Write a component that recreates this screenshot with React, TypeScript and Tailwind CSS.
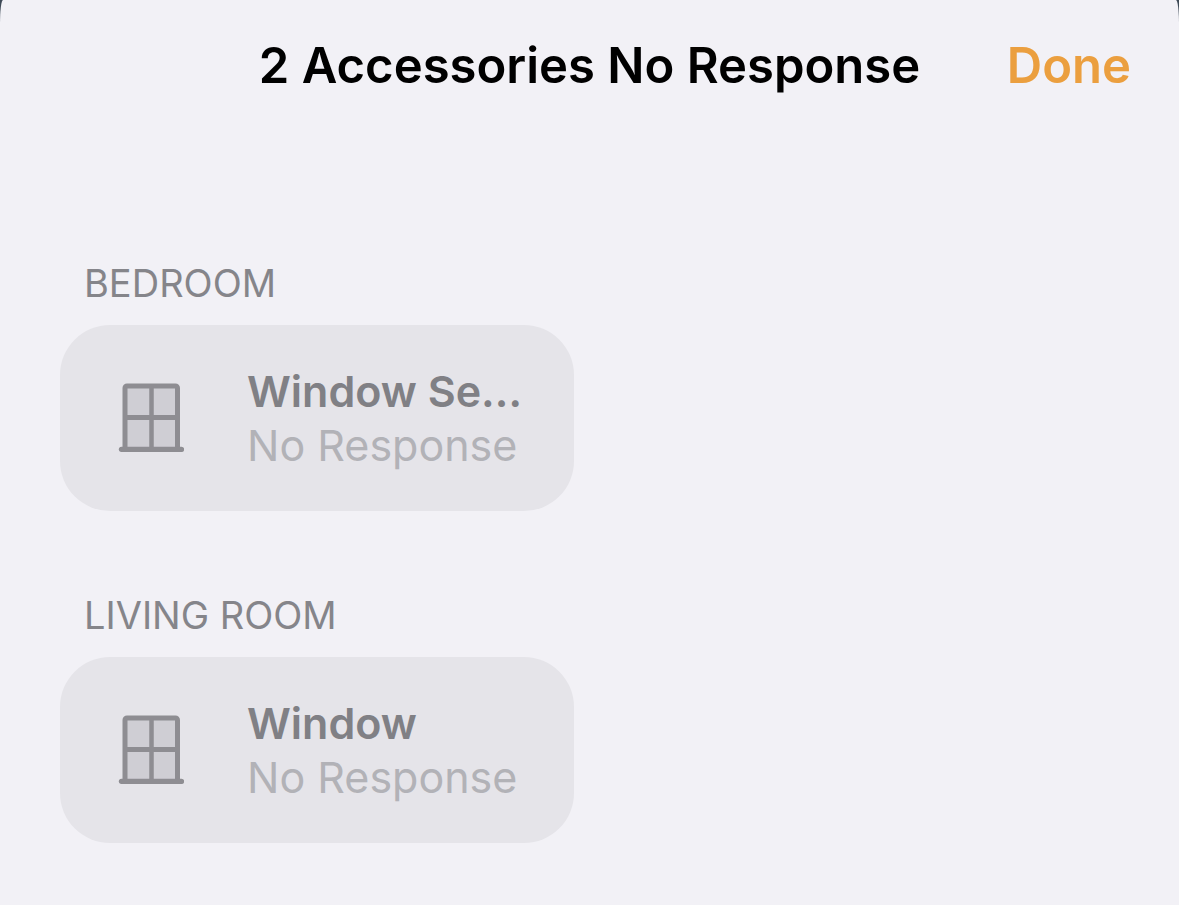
import React from 'react';

type Accessory = { id: number; name: string; status: string };
type Room = { id: string; label: string; accessories: Accessory[] };

const rooms: Room[] = [
  { id: 'bedroom', label: 'BEDROOM', accessories: [{ id: 1, name: 'Window Se…', status: 'No Response' }] },
  { id: 'living-room', label: 'LIVING ROOM', accessories: [{ id: 2, name: 'Window', status: 'No Response' }] },
];

function WindowIcon() {
  return (
    <svg viewBox="0 0 66 72" className="w-[66px] h-[72px] shrink-0" fill="none" aria-hidden="true">
      <rect x="7" y="4" width="52.5" height="63.5" rx="2" fill="#cfced4" stroke="#8e8d92" strokeWidth="5" />
      <path d="M33.5 4v63" stroke="#8e8d92" strokeWidth="4.5" />
      <path d="M7.5 35.5h52" stroke="#8e8d92" strokeWidth="5" />
      <path d="M3.5 67.3h60" stroke="#8e8d92" strokeWidth="5.3" strokeLinecap="round" />
    </svg>
  );
}

function AccessoryTile({ accessory }: { accessory: Accessory }) {
  return (
    <button className="flex h-[186px] items-center gap-[63px] rounded-[50px] bg-[#e5e4e9] pl-[58px] pr-11 text-left">
      <WindowIcon />
      <span className="min-w-0 flex-1 text-[43px] leading-[54px]">
        <span className="block truncate font-semibold text-[#808085]">{accessory.name}</span>
        <span className="block whitespace-nowrap text-[#b2b2b7]">{accessory.status}</span>
      </span>
    </button>
  );
}

export default function App() {
  return (
    <div className="min-h-screen bg-[#3f4a57] font-['Inter',sans-serif]">
      {/* sheet over the dimmed home screen */}
      <main className="min-h-screen rounded-tl-[3px_24px] rounded-tr-[3px_24px] bg-[#f2f1f6]">
        <header className="grid grid-cols-[1fr_auto_1fr] items-center px-12 pt-9">
          <h1 className="col-start-2 whitespace-nowrap text-[49px] leading-[60px] font-semibold text-black">
            2 Accessories No Response
          </h1>
          <button className="justify-self-end text-[49px] leading-[60px] font-semibold text-[#eb9f3f]">Done</button>
        </header>

        <div className="space-y-20 px-[60px] pt-[163px] pb-[60px]">
          {rooms.map((room) => (
            <section key={room.id}>
              <h2 className="pl-6 text-[38px] leading-[48px] text-[#85858a]">{room.label}</h2>
              <div className="mt-[18px] grid grid-cols-2 gap-8">
                {room.accessories.map((accessory) => (
                  <AccessoryTile key={accessory.id} accessory={accessory} />
                ))}
              </div>
            </section>
          ))}
        </div>
      </main>
    </div>
  );
}
